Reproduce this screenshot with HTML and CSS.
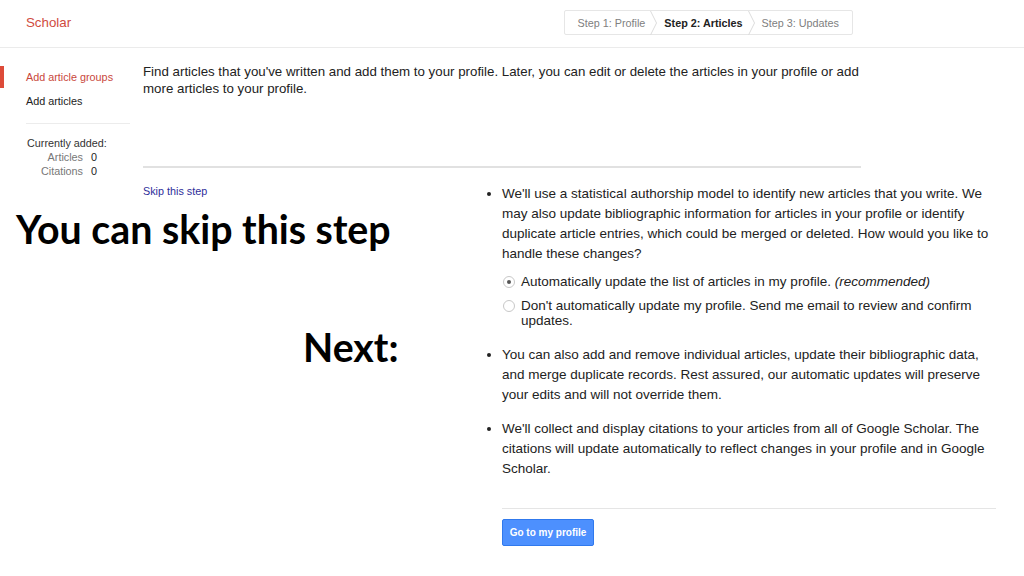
FILE: index.html
```html
<!DOCTYPE html>
<html lang="en">
<head>
<meta charset="utf-8">
<title>Scholar - Step 2: Articles</title>
<link rel="stylesheet" href="styles.css">
</head>
<body>
<header class="topbar">
  <div class="brand">Scholar</div>
  <nav class="steps">
    <span class="step">Step 1: Profile</span>
    <svg class="chev" width="7" height="24" viewBox="0 0 7 24"><path d="M0.5 0 L6.5 12 L0.5 24" fill="none" stroke="#dcdcdc" stroke-width="1"/></svg>
    <span class="step step-active">Step 2: Articles</span>
    <svg class="chev" width="7" height="24" viewBox="0 0 7 24"><path d="M0.5 0 L6.5 12 L0.5 24" fill="none" stroke="#dcdcdc" stroke-width="1"/></svg>
    <span class="step">Step 3: Updates</span>
  </nav>
</header>
<div class="page">
  <aside class="sidenav">
    <div class="nav-item nav-active">Add article groups</div>
    <div class="nav-item">Add articles</div>
    <div class="nav-sep"></div>
    <div class="added-title">Currently added:</div>
    <div class="stats">
      <span class="stat-label">Articles</span><span class="stat-val">0</span>
      <span class="stat-label">Citations</span><span class="stat-val">0</span>
    </div>
  </aside>
  <main class="content">
    <p class="intro">Find articles that you've written and add them to your profile. Later, you can edit or delete the articles in your profile or add more articles to your profile.</p>
    <div class="rule"></div>
    <div class="lower">
      <div class="skip-col"><a class="skip-link" href="#">Skip this step</a></div>
      <div class="info-col">
        <ul class="info-list">
          <li class="info-item info-first">We'll use a statistical authorship model to identify new articles that you write. We may also update bibliographic information for articles in your profile or identify duplicate article entries, which could be merged or deleted. How would you like to handle these changes?
            <div class="radios">
              <label class="radio-row"><span class="radio radio-on"></span><span>Automatically update the list of articles in my profile. <i>(recommended)</i></span></label>
              <label class="radio-row"><span class="radio"></span><span>Don't automatically update my profile. Send me email to review and confirm updates.</span></label>
            </div>
          </li>
          <li class="info-item">You can also add and remove individual articles, update their bibliographic data, and merge duplicate records. Rest assured, our automatic updates will preserve your edits and will not override them.</li>
          <li class="info-item">We'll collect and display citations to your articles from all of Google Scholar. The citations will update automatically to reflect changes in your profile and in Google Scholar.</li>
        </ul>
        <div class="rule-light"></div>
        <button class="btn-primary" type="button">Go to my profile</button>
      </div>
    </div>
  </main>
</div>
<div class="annot annot-skip">You can skip this step</div>
<div class="annot annot-next">Next:</div>
</body>
</html>
```
FILE: styles.css
```css
* { box-sizing: border-box; }
html, body { margin: 0; padding: 0; background: #fff; }
body {
  font-family: "Liberation Sans", Arial, sans-serif;
  color: #222;
  width: 1024px;
  height: 576px;
  overflow: hidden;
  position: relative;
}

.topbar {
  height: 48px;
  border-bottom: 1px solid #ebebeb;
  display: flex;
  align-items: flex-start;
}
.brand {
  margin-left: 26px;
  margin-top: 15px;
  font-size: 13.3px;
  line-height: 16px;
  color: #d04b3e;
}
.steps {
  margin-left: auto;
  margin-right: 171px;
  margin-top: 10px;
  height: 25px;
  border: 1px solid #e6e6e6;
  border-radius: 2px;
  display: flex;
  align-items: center;
  padding: 0 13px;
  gap: 5px;
}
.step {
  font-size: 10.8px;
  color: #808080;
  white-space: nowrap;
}
.step-active { color: #222; font-weight: bold; }
.chev { display: block; flex: none; margin-right: 2px; }

.page {
  display: flex;
  padding-top: 18px;
}
.sidenav {
  width: 143px;
  flex: none;
  font-size: 10.8px;
}
.nav-item {
  line-height: 22px;
  height: 22px;
  padding-left: 26px;
  margin-bottom: 2px;
  color: #222;
}
.nav-active {
  color: #c9473c;
  border-left: 4px solid #dd4b39;
  padding-left: 22px;
}
.nav-sep {
  margin: 11px 13px 0 26px;
  border-top: 1px solid #ececec;
}
.added-title {
  margin-top: 12px;
  padding-left: 27px;
  line-height: 14px;
  color: #333;
}
.stats {
  display: grid;
  grid-template-columns: 57px auto;
  column-gap: 8px;
  padding-left: 26px;
  line-height: 14px;
}
.stat-label { text-align: right; color: #777; }
.stat-val { color: #222; }

.content {
  flex: 1;
  margin-top: -3px;
}
.intro {
  margin: 0;
  max-width: 722px;
  font-size: 13.3px;
  line-height: 17px;
  color: #222;
}
.rule {
  width: 718px;
  margin-top: 69px;
  border-top: 2px solid #e1e1e1;
}
.lower {
  display: flex;
  margin-top: 13px;
}
.skip-col {
  width: 359px;
  flex: none;
}
.skip-link {
  font-size: 10.8px;
  line-height: 14px;
  color: #2e2e9a;
  text-decoration: none;
}
.info-col {
  width: 494px;
  flex: none;
  margin-top: 3px;
}
.info-list {
  margin: 0;
  padding: 0;
  list-style: disc outside;
}
.info-item {
  font-size: 13.5px;
  line-height: 20px;
  color: #222;
  margin-bottom: 14px;
}
.info-first { margin-bottom: 17px; }
.radios {
  margin-top: 10px;
  display: flex;
  flex-direction: column;
  gap: 9px;
}
.radio-row {
  display: flex;
  align-items: flex-start;
  gap: 6px;
  line-height: 15px;
  padding-left: 1px;
}
.radio {
  flex: none;
  width: 12px;
  height: 12px;
  margin-top: 2px;
  border: 1px solid #c8c8c8;
  border-radius: 50%;
  background: #fff;
  position: relative;
}
.radio-on::after {
  content: "";
  position: absolute;
  left: 3px;
  top: 3px;
  width: 4px;
  height: 4px;
  border-radius: 50%;
  background: #555;
}
.rule-light {
  margin-top: 29px;
  border-top: 1px solid #e5e5e5;
}
.btn-primary {
  margin-top: 10px;
  width: 92px;
  height: 27px;
  padding: 0;
  border: 1px solid #3079ed;
  border-radius: 2px;
  background: #4d90fe;
  color: #fff;
  font-family: "Liberation Sans", Arial, sans-serif;
  font-size: 10px;
  font-weight: bold;
}

.annot {
  position: absolute;
  font-family: Lato, "Open Sans", sans-serif;
  font-weight: 700;
  color: #000;
  white-space: nowrap;
  font-size: 39.3px;
  line-height: 1;
}
.annot-skip { left: 16px; top: 209px; }
.annot-next { left: 303px; top: 327px; }
```
